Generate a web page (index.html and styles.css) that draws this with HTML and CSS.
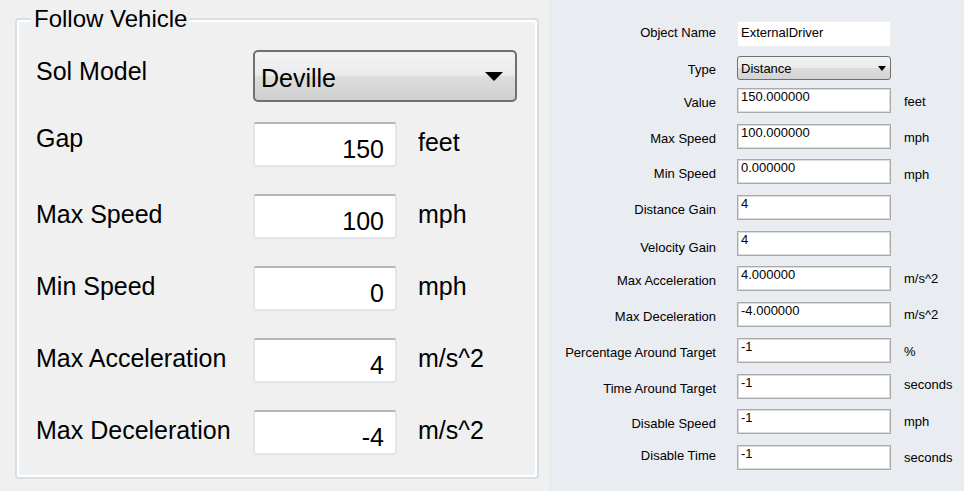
FILE: index.html
```html
<!DOCTYPE html>
<html lang="en">
<head>
<meta charset="utf-8">
<title>Follow Vehicle</title>
<link rel="stylesheet" href="styles.css">
</head>
<body>
<div class="app">
  <section class="left">
    <fieldset class="group">
      <legend class="group-title">Follow Vehicle</legend>
      <div class="row row-model">
        <span class="lbl">Sol Model</span>
        <div class="combo-big"><span class="combo-text">Deville</span><span class="arrow-big"></span></div>
      </div>
      <div class="row">
        <span class="lbl lbl-gap">Gap</span>
        <input class="num" type="text" value="150">
        <span class="unit">feet</span>
      </div>
      <div class="row">
        <span class="lbl">Max Speed</span>
        <input class="num" type="text" value="100">
        <span class="unit">mph</span>
      </div>
      <div class="row">
        <span class="lbl">Min Speed</span>
        <input class="num" type="text" value="0">
        <span class="unit">mph</span>
      </div>
      <div class="row">
        <span class="lbl">Max Acceleration</span>
        <input class="num" type="text" value="4">
        <span class="unit">m/s^2</span>
      </div>
      <div class="row">
        <span class="lbl">Max Deceleration</span>
        <input class="num" type="text" value="-4">
        <span class="unit">m/s^2</span>
      </div>
    </fieldset>
  </section>

  <section class="right">
    <div class="prow prow-name">
      <span class="plbl">Object Name</span>
      <input class="pin pin-name" type="text" value="ExternalDriver">
    </div>
    <div class="prow prow-type">
      <span class="plbl">Type</span>
      <div class="pcombo"><span>Distance</span><span class="arrow-small"></span></div>
    </div>
    <div class="plist">
      <div class="prow"><span class="plbl">Value</span><input class="pin" type="text" value="150.000000"><span class="punit">feet</span></div>
      <div class="prow"><span class="plbl">Max Speed</span><input class="pin" type="text" value="100.000000"><span class="punit">mph</span></div>
      <div class="prow"><span class="plbl">Min Speed</span><input class="pin" type="text" value="0.000000"><span class="punit punit-low">mph</span></div>
      <div class="prow"><span class="plbl">Distance Gain</span><input class="pin" type="text" value="4"></div>
      <div class="prow"><span class="plbl plbl-low">Velocity Gain</span><input class="pin" type="text" value="4"></div>
      <div class="prow"><span class="plbl">Max Acceleration</span><input class="pin" type="text" value="4.000000"><span class="punit punit-high">m/s^2</span></div>
      <div class="prow"><span class="plbl">Max Deceleration</span><input class="pin" type="text" value="-4.000000"><span class="punit punit-high">m/s^2</span></div>
      <div class="prow"><span class="plbl">Percentage Around Target</span><input class="pin" type="text" value="-1"><span class="punit">%</span></div>
      <div class="prow"><span class="plbl">Time Around Target</span><input class="pin" type="text" value="-1"><span class="punit punit-top">seconds</span></div>
      <div class="prow"><span class="plbl">Disable Speed</span><input class="pin" type="text" value="-1"><span class="punit punit-high">mph</span></div>
      <div class="prow prow-last"><span class="plbl plbl-high">Disable Time</span><input class="pin" type="text" value="-1"><span class="punit punit-high">seconds</span></div>
    </div>
  </section>
</div>
</body>
</html>
```

FILE: styles.css
```css
* { box-sizing: border-box; }

html, body {
  margin: 0;
  padding: 0;
  width: 964px;
  height: 491px;
  overflow: hidden;
}

body {
  font-family: "Liberation Sans", Arial, sans-serif;
  color: #000;
}

.app {
  display: flex;
  width: 964px;
  height: 491px;
}

/* ---------- left panel ---------- */
.left {
  width: 550px;
  flex: none;
  background: #f0f0f0;
  padding: 7px 11px 0 15px;
}

.group {
  margin: 0;
  height: 472px;
  padding: 0 0 0 19px;
  border: 2px solid #d6dfe6;
  border-radius: 4px;
  box-shadow: inset 0 0 0 2px #ffffff;
  min-inline-size: 0;
}

.group-title {
  font-size: 24px;
  line-height: 24px;
  padding: 0 3px;
  margin-left: -5px;
  background: #f0f0f0;
}

.row {
  display: flex;
  align-items: flex-start;
  height: 45px;
  margin-top: 27px;
}

.row-model {
  height: 52px;
  margin-top: 19px;
}

.row-model + .row {
  margin-top: 20px;
}

.lbl {
  width: 217px;
  flex: none;
  font-size: 25px;
  line-height: 30px;
  margin-top: 5px;
  white-space: nowrap;
}

.row-model .lbl { margin-top: 6px; }
.lbl-gap { margin-top: 1px; }

.combo-big {
  width: 264px;
  height: 52px;
  border: 2px solid #707070;
  border-radius: 5px;
  background: linear-gradient(#f3f3f3 0%, #ebebeb 48%, #dddddd 52%, #cfcfcf 100%);
  display: flex;
  align-items: flex-start;
  justify-content: space-between;
  padding: 4px 12px 0 6px;
}

.combo-text {
  font-size: 25px;
  line-height: 30px;
  margin-top: 7px;
}

.arrow-big {
  width: 0;
  height: 0;
  border-left: 9px solid transparent;
  border-right: 9px solid transparent;
  border-top: 9px solid #000;
  margin-top: 16px;
}

.num {
  width: 144px;
  height: 45px;
  flex: none;
  font-family: inherit;
  font-size: 25px;
  color: #000;
  text-align: right;
  background: #fff;
  border: 2px solid #e2e5ea;
  border-top-color: #b3b6bd;
  border-radius: 3px;
  padding: 10px 11px 0 4px;
  margin: 0;
  outline: none;
}

.unit {
  font-size: 25px;
  line-height: 30px;
  margin: 5px 0 0 21px;
  white-space: nowrap;
}

/* ---------- right panel ---------- */
.right {
  flex: 1;
  background: #e9ecf0;
  border-left: 1px solid #e2e6ea;
  padding-top: 21px;
  font-size: 13px;
}

.prow {
  display: flex;
  align-items: flex-start;
  height: 25px;
}

.prow-name { height: 26px; }
.prow-type { height: 24px; margin-top: 9px; }

.plist {
  display: flex;
  flex-direction: column;
  row-gap: 10.7px;
  margin-top: 8px;
}

.plbl {
  width: 165px;
  flex: none;
  text-align: right;
  line-height: 15px;
  margin-top: 7px;
  white-space: nowrap;
}

.prow-name .plbl { margin-top: 4px; }
.prow-type .plbl { margin-top: 6px; }
.plbl-low { margin-top: 9px; }
.plbl-high { margin-top: 3px; }

.pin {
  width: 154px;
  height: 25px;
  flex: none;
  margin: 0 0 0 21px;
  font-family: inherit;
  font-size: 13px;
  color: #000;
  background: #fff;
  border: 1px solid #a9a9a9;
  box-shadow: inset 0 0 0 1px #dcdcdc;
  padding: 0 3px 8px 3px;
  outline: none;
}

.pin-name {
  height: 26px;
  border-color: #eeeeee;
  box-shadow: none;
  padding: 0 3px 3px 3px;
}

.pcombo {
  width: 154px;
  height: 24px;
  margin-left: 21px;
  border: 1px solid #707070;
  border-radius: 3px;
  background: linear-gradient(#f2f2f2 0%, #ebebeb 50%, #dddddd 51%, #d3d3d3 100%);
  display: flex;
  align-items: center;
  justify-content: space-between;
  padding: 0 4px 0 3px;
}

.arrow-small {
  width: 0;
  height: 0;
  border-left: 4.5px solid transparent;
  border-right: 4.5px solid transparent;
  border-top: 5px solid #000;
}

.punit {
  line-height: 15px;
  margin: 6px 0 0 13px;
  white-space: nowrap;
}

.punit-low { margin-top: 8px; }
.punit-high { margin-top: 5px; }
.punit-top { margin-top: 3px; }
```
